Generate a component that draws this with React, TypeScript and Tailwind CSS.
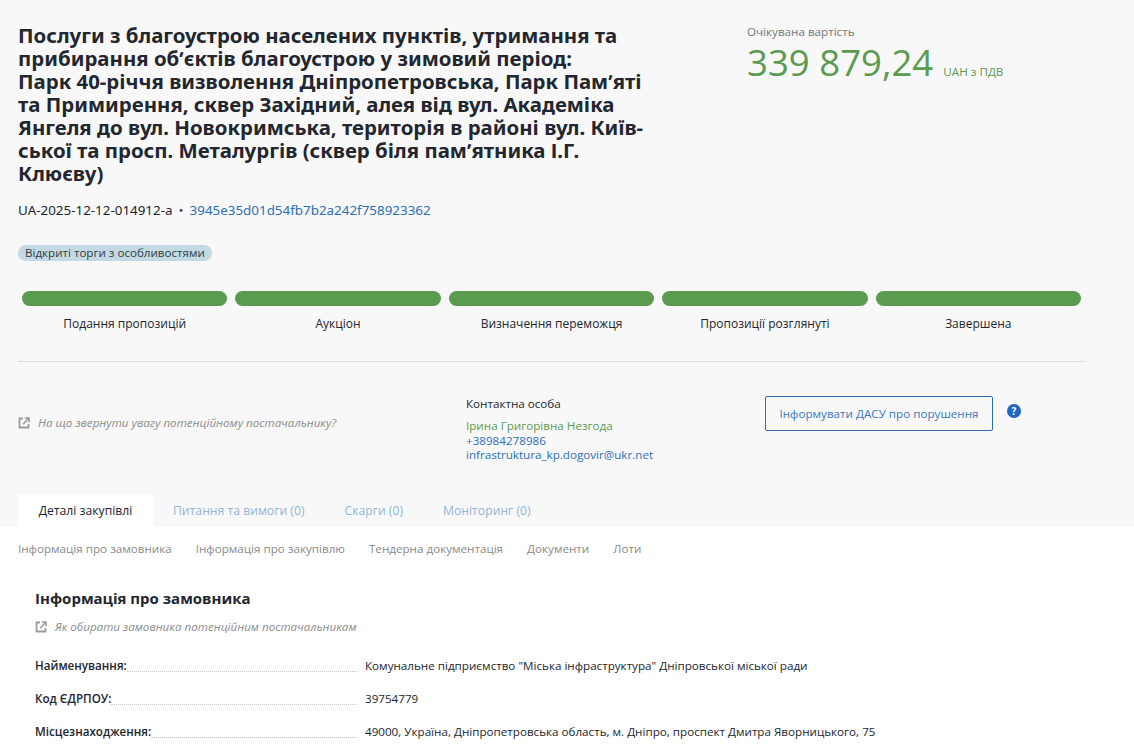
import React from 'react';

const steps = ['Подання пропозицій', 'Аукціон', 'Визначення переможця', 'Пропозиції розглянуті', 'Завершена'];
const tabs = ['Питання та вимоги (0)', 'Скарги (0)', 'Моніторинг (0)'];
const anchors = ['Інформація про замовника', 'Інформація про закупівлю', 'Тендерна документація', 'Документи', 'Лоти'];
const rows = [
  ['Найменування:', 'Комунальне підприємство "Міська інфраструктура" Дніпровської міської ради'],
  ['Код ЄДРПОУ:', '39754779'],
  ['Місцезнаходження:', '49000, Україна, Дніпропетровська область, м. Дніпро, проспект Дмитра Яворницького, 75'],
];
const titleLines = [
  'Послуги з благоустрою населених пунктів, утримання та',
  'прибирання обʼєктів благоустрою у зимовий період:',
  'Парк 40-річчя визволення Дніпропетровська, Парк Памʼяті',
  'та Примирення, сквер Західний, алея від вул. Академіка',
  'Янгеля до вул. Новокримська, територія в районі вул. Київ-',
  'ської та просп. Металургів (сквер біля памʼятника І.Г.',
  'Клюєву)',
];

const HintLink = ({ text }: { text: string }) => (
  <div className="flex items-center gap-[8px] text-[11.65px] italic text-[#8c8c8c]">
    <svg width="12" height="12" viewBox="0 0 12 12" fill="none" className="shrink-0">
      <path d="M5 1.5H1.5v9h9V7" stroke="#9a9a9a" strokeWidth="1.8" />
      <path d="M5 7.2 10 2M6.8 1h4.2v4.2" stroke="#9a9a9a" strokeWidth="1.6" />
    </svg>
    <span>{text}</span>
  </div>
);

const App: React.FC = () => {
  return (
    <div className="h-[752px] overflow-hidden bg-white font-['Open_Sans','Noto_Sans',sans-serif] text-[#22252d]">
      <div className="h-[527px] bg-[#f8f8f8] px-[18px] pt-[24px]">
        <div className="flex">
          <div className="w-[729px]">
            <h1 className="font-['Noto_Sans','Open_Sans',sans-serif] text-[20.4px] font-bold leading-[23px] whitespace-nowrap text-[#22262f]">
              {titleLines.map((l) => (
                <div key={l}>{l}</div>
              ))}
            </h1>
            <div className="mt-[16px] flex items-center font-['Noto_Sans','Open_Sans',sans-serif] text-[13.4px] leading-[18px]">
              <span>UA-2025-12-12-014912-a</span>
              <span className="mx-[6px] text-[#555]">•</span>
              <span className="text-[#2c6fb7]">3945e35d01d54fb7b2a242f758923362</span>
            </div>
            <span className="mt-[26px] block w-fit rounded-full bg-[#c3dae4] px-[7px] text-[11.6px] leading-[16px] text-[#333a40]">
              Відкриті торги з особливостями
            </span>
          </div>
          <div>
            <div className="text-[11.65px] leading-[16px] text-[#757575]">Очікувана вартість</div>
            <div className="-mt-[1px] flex items-baseline gap-[10px] text-[#5a9b50]">
              <span className="text-[36.6px] leading-[46px]">339 879,24</span>
              <span className="text-[11.65px]">UAH з ПДВ</span>
            </div>
          </div>
        </div>

        <div className="mt-[30px] grid w-[1067px] grid-cols-5">
          {steps.map((s) => (
            <div key={s} className="px-[4px] text-center">
              <div className="h-[15px] rounded-full bg-[#5a9b50]" />
              <div className="mt-[9px] text-[12px] leading-[18px] text-[#22252d]">{s}</div>
            </div>
          ))}
        </div>
        <div className="mt-[28px] h-px w-[1067px] bg-[#dcdcdc]" />

        <div className="mt-[34px] flex h-[98px]">
          <div className="w-[448px] pt-[18px]">
            <HintLink text="На що звернути увагу потенційному постачальнику?" />
          </div>
          <div className="w-[299px] text-[11.65px] leading-[14.5px]">
            <div className="leading-[16px] text-[#22252d]">Контактна особа</div>
            <div className="mt-[7px] text-[#5a9b50]">Ірина Григорівна Незгода</div>
            <div className="text-[#2c6fb7]">+38984278986</div>
            <div className="text-[#2c6fb7]">infrastruktura_kp.dogovir@ukr.net</div>
          </div>
          <div className="flex items-start">
            <button className="h-[35px] w-[228px] rounded-[2px] border border-[#2c6fa8] text-[11.65px] text-[#3a78b8]">
              Інформувати ДАСУ про порушення
            </button>
            <span className="ml-[14px] mt-[8px] flex h-[14px] w-[14px] items-center justify-center rounded-full bg-[#1f66c1] text-[10px] font-bold leading-none text-white">
              ?
            </span>
          </div>
        </div>

        <div className="flex h-[33px]">
          <div className="flex w-[135px] items-center justify-center bg-white pt-[1px] text-[12.2px] text-[#22252d]">Деталі закупівлі</div>
          {tabs.map((t) => (
            <div key={t} className="ml-[20px] flex items-center pt-[1px] text-[12.2px] text-[#93b5d8]">
              <span className="mr-[20px]">{t}</span>
            </div>
          ))}
        </div>
      </div>

      <div className="flex gap-[24px] pl-[18px] pt-[14px] text-[11.65px] leading-[16px] text-[#8a8a8a]">
        {anchors.map((a) => (
          <span key={a}>{a}</span>
        ))}
      </div>

      <div className="pl-[35px] pt-[31px]">
        <h2 className="text-[15px] font-bold leading-[20px] text-[#22262f]">Інформація про замовника</h2>
        <div className="mt-[10px]">
          <HintLink text="Як обирати замовника потенційним постачальникам" />
        </div>
        <div className="mt-[14px]">
          {rows.map(([label, value]) => (
            <div key={label} className="flex h-[33px] items-center text-[11.65px]">
              <div className="flex w-[322px] shrink-0 items-end">
                <span className="font-semibold text-[#22252d]">{label}</span>
                <span className="mb-[3px] h-0 flex-1 border-b border-dotted border-[#c4c4c4]" />
              </div>
              <span className="ml-[8px] text-[#22252d]">{value}</span>
            </div>
          ))}
        </div>
      </div>
    </div>
  );
};

export default App;
